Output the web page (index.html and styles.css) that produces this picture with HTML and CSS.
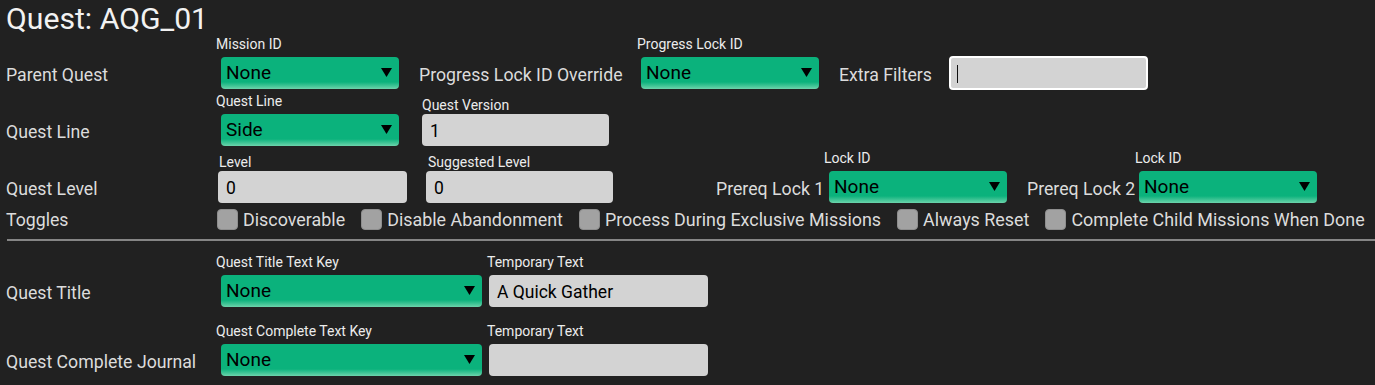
FILE: index.html
```html
<!DOCTYPE html>
<html lang="en">
<head>
<meta charset="utf-8">
<title>Quest: AQG_01</title>
<link rel="stylesheet" href="styles.css">
</head>
<body>
<div class="page">
  <h1 class="title">Quest: AQG_01</h1>

  <div class="row row-parent">
    <div class="row-label">Parent Quest</div>
    <div class="field field-dd">
      <span class="cap">Mission ID</span>
      <div class="dropdown dd-narrow"><span class="dd-value">None</span><svg class="dd-arrow" width="11" height="9" viewBox="0 0 11 9"><polygon points="0,0 11,0 5.5,9" fill="#000"/></svg></div>
    </div>
    <span class="inline-label il-override">Progress Lock ID Override</span>
    <div class="field field-dd field-plid">
      <span class="cap">Progress Lock ID</span>
      <div class="dropdown dd-narrow dd-plid"><span class="dd-value">None</span><svg class="dd-arrow" width="11" height="9" viewBox="0 0 11 9"><polygon points="0,0 11,0 5.5,9" fill="#000"/></svg></div>
    </div>
    <span class="inline-label il-filters">Extra Filters</span>
    <div class="textbox tb-filters focused"><span class="caret"></span></div>
  </div>

  <div class="row row-line">
    <div class="row-label">Quest Line</div>
    <div class="field field-dd">
      <span class="cap">Quest Line</span>
      <div class="dropdown dd-narrow"><span class="dd-value">Side</span><svg class="dd-arrow" width="11" height="9" viewBox="0 0 11 9"><polygon points="0,0 11,0 5.5,9" fill="#000"/></svg></div>
    </div>
    <div class="field field-in field-version">
      <span class="cap">Quest Version</span>
      <div class="textbox tb-version">1</div>
    </div>
  </div>

  <div class="row row-level">
    <div class="row-label">Quest Level</div>
    <div class="field field-in field-level">
      <span class="cap cap-level">Level</span>
      <div class="textbox tb-level">0</div>
    </div>
    <div class="field field-in field-sugg">
      <span class="cap cap-sugg">Suggested Level</span>
      <div class="textbox tb-sugg">0</div>
    </div>
    <span class="inline-label il-prereq1">Prereq Lock 1</span>
    <div class="field field-dd field-lock1">
      <span class="cap">Lock ID</span>
      <div class="dropdown dd-narrow"><span class="dd-value">None</span><svg class="dd-arrow" width="11" height="9" viewBox="0 0 11 9"><polygon points="0,0 11,0 5.5,9" fill="#000"/></svg></div>
    </div>
    <span class="inline-label il-prereq2">Prereq Lock 2</span>
    <div class="field field-dd field-lock2">
      <span class="cap">Lock ID</span>
      <div class="dropdown dd-narrow dd-lock2"><span class="dd-value">None</span><svg class="dd-arrow" width="11" height="9" viewBox="0 0 11 9"><polygon points="0,0 11,0 5.5,9" fill="#000"/></svg></div>
    </div>
  </div>

  <div class="row row-toggles">
    <div class="row-label toggles-label">Toggles</div>
    <div class="toggles">
      <label class="toggle"><span class="check"></span><span class="toggle-text">Discoverable</span></label>
      <label class="toggle"><span class="check"></span><span class="toggle-text">Disable Abandonment</span></label>
      <label class="toggle"><span class="check"></span><span class="toggle-text">Process During Exclusive Missions</span></label>
      <label class="toggle"><span class="check"></span><span class="toggle-text">Always Reset</span></label>
      <label class="toggle"><span class="check"></span><span class="toggle-text">Complete Child Missions When Done</span></label>
    </div>
  </div>

  <hr class="separator">

  <div class="row row-title">
    <div class="row-label">Quest Title</div>
    <div class="field field-dd">
      <span class="cap">Quest Title Text Key</span>
      <div class="dropdown dd-wide"><span class="dd-value">None</span><svg class="dd-arrow" width="11" height="9" viewBox="0 0 11 9"><polygon points="0,0 11,0 5.5,9" fill="#000"/></svg></div>
    </div>
    <div class="field field-temp">
      <span class="cap">Temporary Text</span>
      <div class="textbox tb-temp">A Quick Gather</div>
    </div>
  </div>

  <div class="row row-complete">
    <div class="row-label">Quest Complete Journal</div>
    <div class="field field-dd">
      <span class="cap">Quest Complete Text Key</span>
      <div class="dropdown dd-wide"><span class="dd-value">None</span><svg class="dd-arrow" width="11" height="9" viewBox="0 0 11 9"><polygon points="0,0 11,0 5.5,9" fill="#000"/></svg></div>
    </div>
    <div class="field field-temp">
      <span class="cap">Temporary Text</span>
      <div class="textbox tb-temp"></div>
    </div>
  </div>
</div>
</body>
</html>
```

FILE: styles.css
```css
html, body {
  margin: 0;
  padding: 0;
  background: #212121;
}

body {
  width: 1375px;
  height: 385px;
  overflow: hidden;
  font-family: Roboto, "Liberation Sans", sans-serif;
  color: #dcdcdc;
}

.page {
  display: flex;
  flex-direction: column;
}

.title {
  margin: 0;
  padding: 2px 0 0 6px;
  font-size: 30.2px;
  line-height: 34px;
  font-weight: 400;
  color: #f2f2f2;
}

.row {
  display: flex;
  align-items: flex-end;
  padding-left: 6px;
}

.row-label {
  width: 210px;
  flex: none;
  height: 32px;
  display: flex;
  align-items: center;
  font-size: 17.7px;
  white-space: nowrap;
  padding-top: 3px;
  box-sizing: border-box;
}

.inline-label {
  flex: none;
  height: 32px;
  display: flex;
  align-items: center;
  font-size: 17.7px;
  white-space: nowrap;
  padding-top: 3px;
  box-sizing: border-box;
}

.field {
  display: flex;
  flex-direction: column;
  flex: none;
}

.cap {
  font-size: 14px;
  line-height: 17px;
  color: #ececec;
  white-space: nowrap;
}

.field-dd .cap { margin-bottom: 4px; }
.field-dd .dropdown { margin-left: 5px; }
.field-in .cap { margin-bottom: 0; }
.field-temp .cap { margin-bottom: 4px; }

/* dropdowns */
.dropdown {
  height: 32px;
  box-sizing: border-box;
  border-radius: 4px;
  background: linear-gradient(to bottom, #0bb27c 0%, #0bb27c 78%, #3fc495 90%, #6dd4ac 100%);
  display: flex;
  align-items: center;
  justify-content: space-between;
  padding: 0 7px 1px 5px;
  color: #000;
}

.dd-narrow { width: 178px; }
.dd-wide { width: 261px; }

.dd-value {
  font-size: 19px;
  line-height: 22px;
}

.dd-arrow {
  display: block;
  margin-top: 0;
}

/* text boxes */
.textbox {
  height: 32px;
  box-sizing: border-box;
  border-radius: 4px;
  background: #d3d3d3;
  color: #000;
  font-size: 17.5px;
  display: flex;
  align-items: center;
  padding: 1px 8px 0 8px;
}

.tb-version { width: 187px; }
.tb-level { width: 189px; margin-left: -1px; }
.tb-sugg { width: 187px; margin-left: -1px; }
.tb-temp { width: 219px; margin-left: 2px; }

.tb-filters {
  width: 199px;
  height: 34px;
  border: 2px solid #ffffff;
  margin-bottom: -1px;
  margin-left: 15px;
  padding-left: 6px;
}

.caret {
  display: block;
  width: 1px;
  height: 18px;
  background: #111;
}

/* row-specific spacing */
.row-parent { margin-top: 0; }
.il-override { margin-left: 20px; width: 203px; }
.field-plid { margin-left: 15px; }
.field-plid .dropdown { margin-left: 4px; }
.il-filters { margin-left: 20px; width: 95px; }

.row-line { margin-top: 4px; }
.field-version { margin-left: 23px; }

.row-level { margin-top: 4px; }
.field-level { margin-left: 3px; }
.field-sugg { margin-left: 20px; }
.cap-sugg { margin-left: 1px; }
.il-prereq1 { margin-left: 103px; width: 105px; }
.field-lock1 { margin-left: 3px; }
.il-prereq2 { margin-left: 20px; width: 106px; }
.field-lock2 { margin-left: 2px; }
.field-lock2 .dropdown { margin-left: 4px; }

.row-toggles {
  margin-top: 6px;
  align-items: center;
}

.toggles-label {
  height: 21px;
  padding-top: 0;
}

.toggles {
  display: flex;
  align-items: center;
  gap: 16px;
  margin-left: 1px;
}

.toggle {
  display: flex;
  align-items: center;
  gap: 5px;
}

.check {
  width: 21px;
  height: 21px;
  box-sizing: border-box;
  border-radius: 4px;
  background: #a2a2a2;
  border: 1px solid #8e8e8e;
  flex: none;
}

.toggle-text {
  font-size: 17.9px;
  line-height: 21px;
  color: #dcdcdc;
  white-space: nowrap;
}

.separator {
  margin: 9px 0 0 7px;
  border: none;
  height: 2px;
  background: #858585;
}

.row-title { margin-top: 13px; }
.field-temp { margin-left: 5px; }
.row-complete { margin-top: 16px; }
```
